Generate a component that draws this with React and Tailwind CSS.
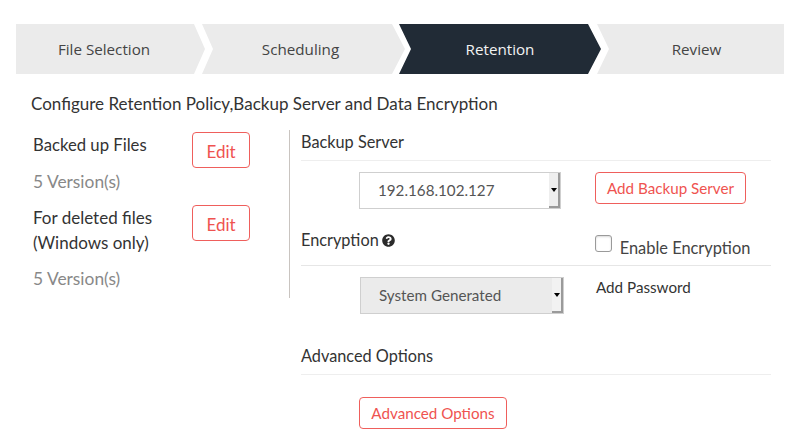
import { FaQuestionCircle } from 'react-icons/fa';

const lato = { fontFamily: 'Lato, sans-serif' };

function Step({ label, className }) {
  return (
    <div className={`flex h-[50px] items-center justify-center text-[15.2px] font-['Open_Sans',sans-serif] ${className}`}>
      {label}
    </div>
  );
}

function RedButton({ children, className }) {
  return (
    <button className={`flex items-center justify-center rounded-[4px] border border-[#ef5f5c] bg-white text-[#ef5350] ${className}`}>
      {children}
    </button>
  );
}

function FakeSelect({ value, className, bg, btn }) {
  return (
    <div className={`flex h-[37px] items-stretch border border-[#cfcfcf] ${bg} ${className}`}>
      <div className="flex flex-1 items-center pl-[18px] text-[15.2px] text-[#555]">{value}</div>
      <div className={`flex w-[11px] items-center justify-center border-r-2 border-b-2 border-[#9a9a9a] ${btn}`}>
        <div className="h-0 w-0 border-x-[3px] border-t-[4px] border-x-transparent border-t-black" />
      </div>
    </div>
  );
}

export default function App() {
  return (
    <div className="h-[445px] w-[800px] overflow-hidden bg-white pt-6 font-['Lato',sans-serif]">
      <div className="ml-4 flex w-[768px]">
        <Step label="File Selection" className="w-[189px] shrink-0 bg-[#ebebeb] pr-[13px] text-[#444] [clip-path:polygon(0_0,178px_0,100%_50%,178px_100%,0_100%)]" />
        <Step label="Scheduling" className="-ml-[3px] w-[203px] shrink-0 bg-[#ebebeb] pr-[6px] text-[#444] [clip-path:polygon(0_0,190px_0,100%_50%,190px_100%,0_100%,11px_50%)]" />
        <Step label="Retention" className="-ml-[6px] w-[202px] shrink-0 bg-[#212b36] text-[#f2f2f2] [clip-path:polygon(0_0,189px_0,100%_50%,189px_100%,0_100%,12px_50%)]" />
        <Step label="Review" className="-ml-[4px] w-[187px] shrink-0 bg-[#ebebeb] pl-[12px] text-[#444] [clip-path:polygon(0_0,100%_0,100%_100%,0_100%,12px_50%)]" />
      </div>

      <div className="ml-[31px] mt-[20px] text-[17px] leading-5 text-[#333]" style={lato}>
        Configure Retention Policy,Backup Server and Data Encryption
      </div>

      <div className="mt-[16px] flex">
        <div className="ml-[33px] h-[168px] w-[257px] shrink-0 border-r border-[#c9c4c0] pr-[39px]">
          <div className="flex justify-between">
            <div>
              <div className="text-[16.7px] leading-[30px] text-[#333]">Backed up Files</div>
              <div className="mt-[7px] text-[17.4px] leading-[30px] text-[#888]">5 Version(s)</div>
            </div>
            <RedButton className="mt-[2px] h-[36px] w-[58px] pt-[3px] text-[17px]">Edit</RedButton>
          </div>
          <div className="mt-[8px] flex justify-between">
            <div>
              <div className="text-[17px] leading-[25px] text-[#333]">For deleted files<br />(Windows only)</div>
              <div className="mt-[9px] text-[17.4px] leading-[30px] text-[#888]">5 Version(s)</div>
            </div>
            <RedButton className="mt-0 h-[36px] w-[58px] pt-[3px] text-[17px]">Edit</RedButton>
          </div>
        </div>

        <div className="ml-[11px] w-[470px]">
          <div className="h-[31px] border-b border-[#eeeeee] pt-[2px] text-[16.3px] leading-5 text-[#333]">Backup Server</div>
          <div className="mt-[11px] flex items-start">
            <FakeSelect value="192.168.102.127" className="ml-[58px] w-[202px]" bg="bg-white" btn="bg-[#eeeeee]" />
            <RedButton className="ml-[34px] h-[32px] w-[151px] text-[15.2px]">Add Backup Server</RedButton>
          </div>
          <div className="mt-[12px] flex h-[45px] items-start border-b border-[#e6e6e6]">
            <div className="mt-[9px] flex items-center text-[16.3px] leading-5 text-[#333]">
              Encryption
              <FaQuestionCircle className="ml-[3px] mt-[1px] text-[13px] text-[#2b2b2b]" />
            </div>
            <div className="ml-[200px] mt-[14px] flex items-start">
              <div className="h-[17px] w-[17px] rounded-[3px] border border-[#9a9a9a] bg-white shadow-[inset_0_1px_2px_rgba(0,0,0,0.15)]" />
              <span className="ml-[8px] mt-[3px] text-[16.4px] leading-5 text-[#444]">Enable Encryption</span>
            </div>
          </div>
          <div className="mt-[11px] flex items-start">
            <FakeSelect value="System Generated" className="ml-[59px] w-[204px]" bg="bg-[#ebebeb]" btn="bg-[#f2f2f2]" />
            <div className="ml-[32px] text-[15.2px] leading-5 text-[#333]">Add Password</div>
          </div>
          <div className="mt-[32px] h-[29px] border-b border-[#eeeeee] text-[16.3px] leading-5 text-[#333]">Advanced Options</div>
          <RedButton className="ml-[58px] mt-[22px] h-[32px] w-[148px] text-[15.2px]">Advanced Options</RedButton>
        </div>
      </div>
    </div>
  );
}
